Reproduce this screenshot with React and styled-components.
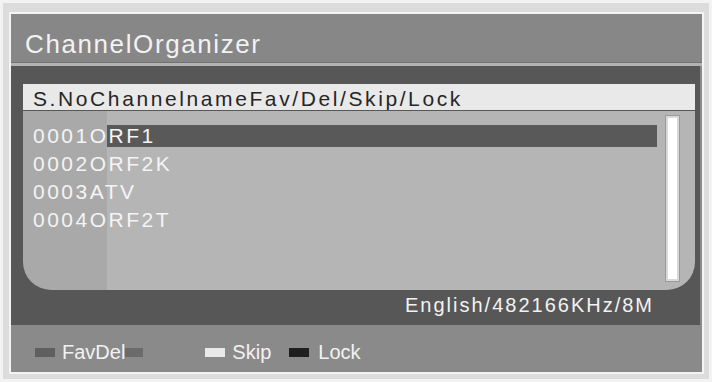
import React from 'react';
import styled, { createGlobalStyle } from 'styled-components';

const GlobalStyle = createGlobalStyle`
  html, body {
    margin: 0;
    padding: 0;
    background: #f3f3f3;
    font-family: "Liberation Sans", Arial, sans-serif;
  }
`;

const Frame = styled.div`
  margin: 3px;
  padding: 9px 5px 5px 6px;
  background: #dcdcdc;
  width: 706px;
  height: 376px;
  box-sizing: border-box;
`;

const Panel = styled.div`
  border: 2px solid #f4f4f4;
  display: flex;
  flex-direction: column;
  height: 100%;
  box-sizing: border-box;
  background: #5a5a5a;
`;

const TitleBar = styled.div`
  height: 49px;
  box-sizing: border-box;
  padding: 17px 0 0 14px;
  background: #878787;
  border-bottom: 1px solid #737373;
  color: #f2f2f2;
  font-size: 26px;
  line-height: 26px;
  letter-spacing: 1.6px;
`;

const Stripe = styled.div`
  height: 3px;
  background: #b3b3b3;
`;

const Body = styled.div`
  height: 259px;
  box-sizing: border-box;
  padding: 18px 5px 0 12px;
  background: #575757;
  display: flex;
  flex-direction: column;
  border-right: 2px solid #8a8a8a;
`;

const HeaderRow = styled.div`
  height: 26px;
  box-sizing: border-box;
  padding: 5px 0 0 10px;
  background: #e9e9e9;
  color: #262626;
  font-size: 21px;
  line-height: 20px;
  letter-spacing: 2.6px;
  white-space: nowrap;
`;

const List = styled.div`
  margin-top: 1px;
  height: 179px;
  display: flex;
  background: linear-gradient(to right, #a9a9a9 84px, #b5b5b5 84px);
  border-radius: 0 0 28px 28px;
`;

const Rows = styled.div`
  flex: 1;
  padding-top: 14px;
  display: flex;
  flex-direction: column;
  gap: 6px;
`;

const Row = styled.div`
  height: 22px;
  padding-left: 10px;
  color: #f4f4f4;
  font-size: 21px;
  line-height: 22px;
  letter-spacing: 2.5px;
  white-space: nowrap;
  background: ${(p) =>
    p.$selected ? 'linear-gradient(to right, transparent 84px, #595959 84px)' : 'transparent'};
`;

const Scroll = styled.div`
  width: 13px;
  margin: 5px 16px 9px 9px;
  box-sizing: border-box;
  border: 2px solid #d8d8d8;
  outline: 1px solid #9a9a9a;
  background: #ffffff;
`;

const Info = styled.div`
  height: 35px;
  box-sizing: border-box;
  padding: 5px 41px 0 0;
  text-align: right;
  color: #f2f2f2;
  font-size: 20px;
  line-height: 20px;
  letter-spacing: 2px;
`;

const Footer = styled.div`
  flex: 1;
  background: #8a8a8a;
  display: flex;
  align-items: flex-start;
  padding: 17px 0 0 24px;
  box-sizing: border-box;
`;

const Item = styled.div`
  display: flex;
  align-items: center;
  height: 20px;
  margin-right: ${(p) => p.$after}px;
  color: #f2f2f2;
  font-size: 20px;
  line-height: 20px;
`;

const Swatch = styled.span`
  display: inline-block;
  width: ${(p) => p.$w || 20}px;
  height: 9px;
  background: ${(p) => p.$color};
  margin-right: ${(p) => p.$gap || 0}px;
`;

const channels = [
  { no: '0001', name: 'ORF1' },
  { no: '0002', name: 'ORF2K' },
  { no: '0003', name: 'ATV' },
  { no: '0004', name: 'ORF2T' },
];

export default function App() {
  return (
    <>
      <GlobalStyle />
      <Frame>
        <Panel>
          <TitleBar>ChannelOrganizer</TitleBar>
          <Stripe />
          <Body>
            <HeaderRow>S.NoChannelnameFav/Del/Skip/Lock</HeaderRow>
            <List>
              <Rows>
                {channels.map((c, i) => (
                  <Row key={c.no} $selected={i === 0}>
                    {c.no}
                    {c.name}
                  </Row>
                ))}
              </Rows>
              <Scroll />
            </List>
            <Info>English/482166KHz/8M</Info>
          </Body>
          <Footer>
            <Item $after={62}>
              <Swatch $color="#5f5f5f" $gap={7} />
              FavDel
              <Swatch $color="#6b6b6b" $w={18} />
            </Item>
            <Item $after={18}>
              <Swatch $color="#e9e9e9" $gap={7} />
              Skip
            </Item>
            <Item $after={0}>
              <Swatch $color="#1f1f1f" $gap={9} />
              Lock
            </Item>
          </Footer>
        </Panel>
      </Frame>
    </>
  );
}
